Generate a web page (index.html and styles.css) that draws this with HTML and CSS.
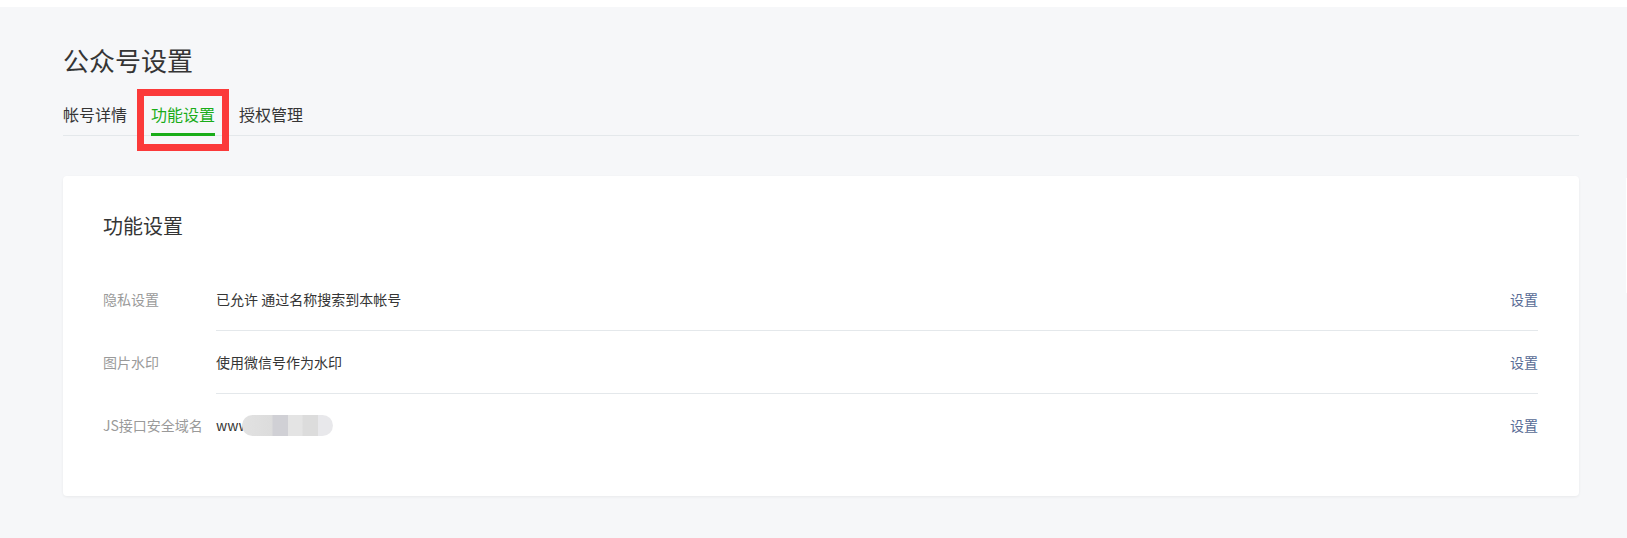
FILE: index.html
```html
<!DOCTYPE html>
<html lang="zh-CN">
<head>
<meta charset="utf-8">
<title>公众号设置</title>
<link rel="stylesheet" href="styles.css">
</head>
<body>
<div class="topbar"></div>
<div class="main">
  <h1 class="page-title">公众号设置</h1>
  <div class="tabs">
    <div class="tab">帐号详情</div>
    <div class="tab tab-active">功能设置<span class="highlight"></span></div>
    <div class="tab">授权管理</div>
  </div>
  <div class="card">
    <h2 class="card-title">功能设置</h2>
    <div class="rows">
      <div class="row">
        <div class="label">隐私设置</div>
        <div class="cell">
          <div class="value">已允许 通过名称搜索到本帐号</div>
          <a class="action">设置</a>
        </div>
      </div>
      <div class="row">
        <div class="label">图片水印</div>
        <div class="cell">
          <div class="value">使用微信号作为水印</div>
          <a class="action">设置</a>
        </div>
      </div>
      <div class="row row-last">
        <div class="label">JS接口安全域名</div>
        <div class="cell">
          <div class="value">www<span class="blurred"></span></div>
          <a class="action">设置</a>
        </div>
      </div>
    </div>
  </div>
</div>
<div class="side-panel"></div>
</body>
</html>
```
FILE: styles.css
```css
html, body {
  margin: 0;
  padding: 0;
}
body {
  background: #f6f7f9;
  font-family: "Noto Sans CJK SC", "Microsoft YaHei", sans-serif;
  color: #353535;
  overflow: hidden;
  height: 538px;
  position: relative;
}
.topbar {
  height: 7px;
  background: #ffffff;
}
.main {
  padding: 0 48px 0 63px;
}
.page-title {
  margin: 0;
  padding-top: 35px;
  font-size: 26px;
  font-weight: 400;
  line-height: 36px;
  color: #353535;
}
.tabs {
  display: flex;
  gap: 24px;
  margin-top: 24px;
  border-bottom: 1px solid #e4e8eb;
}
.tab {
  position: relative;
  font-size: 16px;
  line-height: 24px;
  padding-bottom: 7px;
  border-bottom: 3px solid transparent;
  margin-bottom: -1px;
  color: #353535;
}
.tab-active {
  color: #1aad19;
  border-bottom-color: #1aad19;
}
.highlight {
  position: absolute;
  left: -14px;
  top: -13px;
  width: 92px;
  height: 62px;
  box-sizing: border-box;
  border: 7px solid #fb3a3a;
}
.card {
  margin-top: 40px;
  background: #ffffff;
  border-radius: 4px;
  box-shadow: 0 1px 3px rgba(0, 0, 0, 0.06);
  padding: 36px 41px 40px 40px;
}
.card-title {
  margin: 0;
  font-size: 20px;
  font-weight: 400;
  line-height: 28px;
  color: #353535;
}
.rows {
  margin-top: 28px;
}
.row {
  display: flex;
  font-size: 14px;
}
.label {
  width: 113px;
  flex: none;
  color: #9a9a9a;
  line-height: 62px;
  white-space: nowrap;
}
.cell {
  flex: 1;
  display: flex;
  justify-content: space-between;
  align-items: center;
  height: 62px;
  border-bottom: 1px solid #e4e8eb;
}
.row-last .cell {
  border-bottom: none;
}
.value {
  color: #353535;
  display: flex;
  align-items: center;
}
.action {
  color: #576b95;
  cursor: pointer;
}
.blurred {
  display: inline-block;
  width: 91px;
  height: 21px;
  margin-left: -8px;
  border-radius: 11px;
  background: linear-gradient(90deg,
    #e2e2e2 0, #dcdcdc 33%, #d0d0d5 34%, #d0d0d5 50%,
    #e4e4e4 51%, #e4e4e4 66%, #dcdcdc 67%, #dcdcdc 83%, #e8e8eb 84%);
  filter: blur(0.6px);
}
.side-panel {
  position: absolute;
  right: 0;
  top: 178px;
  width: 1px;
  height: 115px;
  background: #ffffff;
  box-shadow: 0 0 40px rgba(0, 0, 0, 0.06);
}
```
